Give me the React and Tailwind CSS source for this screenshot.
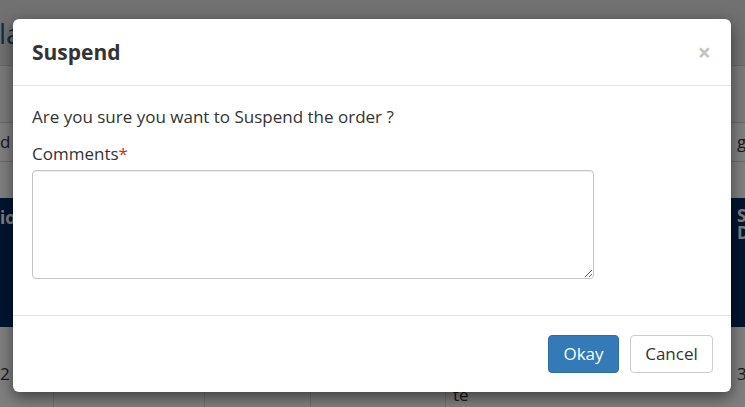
import React from 'react';

const font = { fontFamily: '"Open Sans", "Noto Sans", sans-serif' };

const App = () => {
  return (
    <div className="relative w-[745px] h-[407px] overflow-hidden bg-white" style={font}>
      {/* Page behind the dialog */}
      <div className="flex flex-col">
        <div className="h-[66px] bg-[#e2e2e2] border-b border-[#cfcfcf] flex items-center">
          <span className="text-[28px] text-[#1f5c93] -ml-[1px] leading-none">la</span>
        </div>
        <div className="h-[57px] bg-[#f4f4f4] border-b border-[#d0d0d0]"></div>
        <div className="h-[39px] bg-white border-b border-[#d0d0d0] flex items-center justify-between text-[17px] text-[#333]">
          <span>d</span>
          <span className="w-[8px] overflow-hidden">g</span>
        </div>
        <div className="h-[36px] bg-white"></div>
        <div className="h-[129px] bg-[#002b60] flex justify-between pt-[9px] text-[17px] font-bold text-white leading-[17px]">
          <span className="pt-[2px]">io</span>
          <span className="w-[8px] overflow-hidden">S<br />D</span>
        </div>
        <div className="h-[80px] bg-white flex text-[17px] text-[#333]">
          <div className="w-[54px] border-r border-[#ddd] pt-[34px]">2</div>
          <div className="w-[151px] border-r border-[#ddd]"></div>
          <div className="w-[106px] border-r border-[#ddd]"></div>
          <div className="w-[135px] border-r border-[#ddd]"></div>
          <div className="flex-1 flex justify-between">
            <span className="pl-[7px] pt-[55px]">te</span>
            <span className="w-[8px] overflow-hidden pt-[34px]">3</span>
          </div>
        </div>
      </div>

      {/* Backdrop */}
      <div className="absolute inset-0 bg-black/50"></div>

      {/* Dialog */}
      <div className="absolute left-[13px] top-[19px] w-[718px] rounded-[6px] bg-white shadow-[0_5px_15px_rgba(0,0,0,0.5)]">
        <div className="h-[67px] px-[19px] border-b border-[#e5e5e5] flex items-center justify-between">
          <h4 className="text-[21px] font-bold text-[#333] pt-[1px]">Suspend</h4>
          <button className="text-[23px] font-bold text-[#c2c2c2] leading-none pr-[1px]">×</button>
        </div>
        <div className="px-[19px] pt-[19px] pb-[36px] text-[17px] text-[#333]">
          <p className="leading-[23px]">Are you sure you want to Suspend the order ?</p>
          <label className="block mt-[14px] leading-[23px]">
            Comments<span className="text-[#c9302c]">*</span>
          </label>
          <textarea className="block mt-[5px] w-[562px] h-[109px] rounded-[4px] border border-[#c5c5c5] shadow-[inset_0_1px_1px_rgba(0,0,0,0.075)] outline-none"></textarea>
        </div>
        <div className="h-[77px] border-t border-[#e5e5e5] flex items-center justify-end gap-[11px] pr-[18px]">
          <button className="w-[71px] h-[38px] rounded-[4px] bg-[#337ab7] border border-[#2e6da4] text-white text-[17px]">Okay</button>
          <button className="w-[83px] h-[38px] rounded-[4px] bg-white border border-[#ccc] text-[#333] text-[17px]">Cancel</button>
        </div>
      </div>
    </div>
  );
};

export default App;
